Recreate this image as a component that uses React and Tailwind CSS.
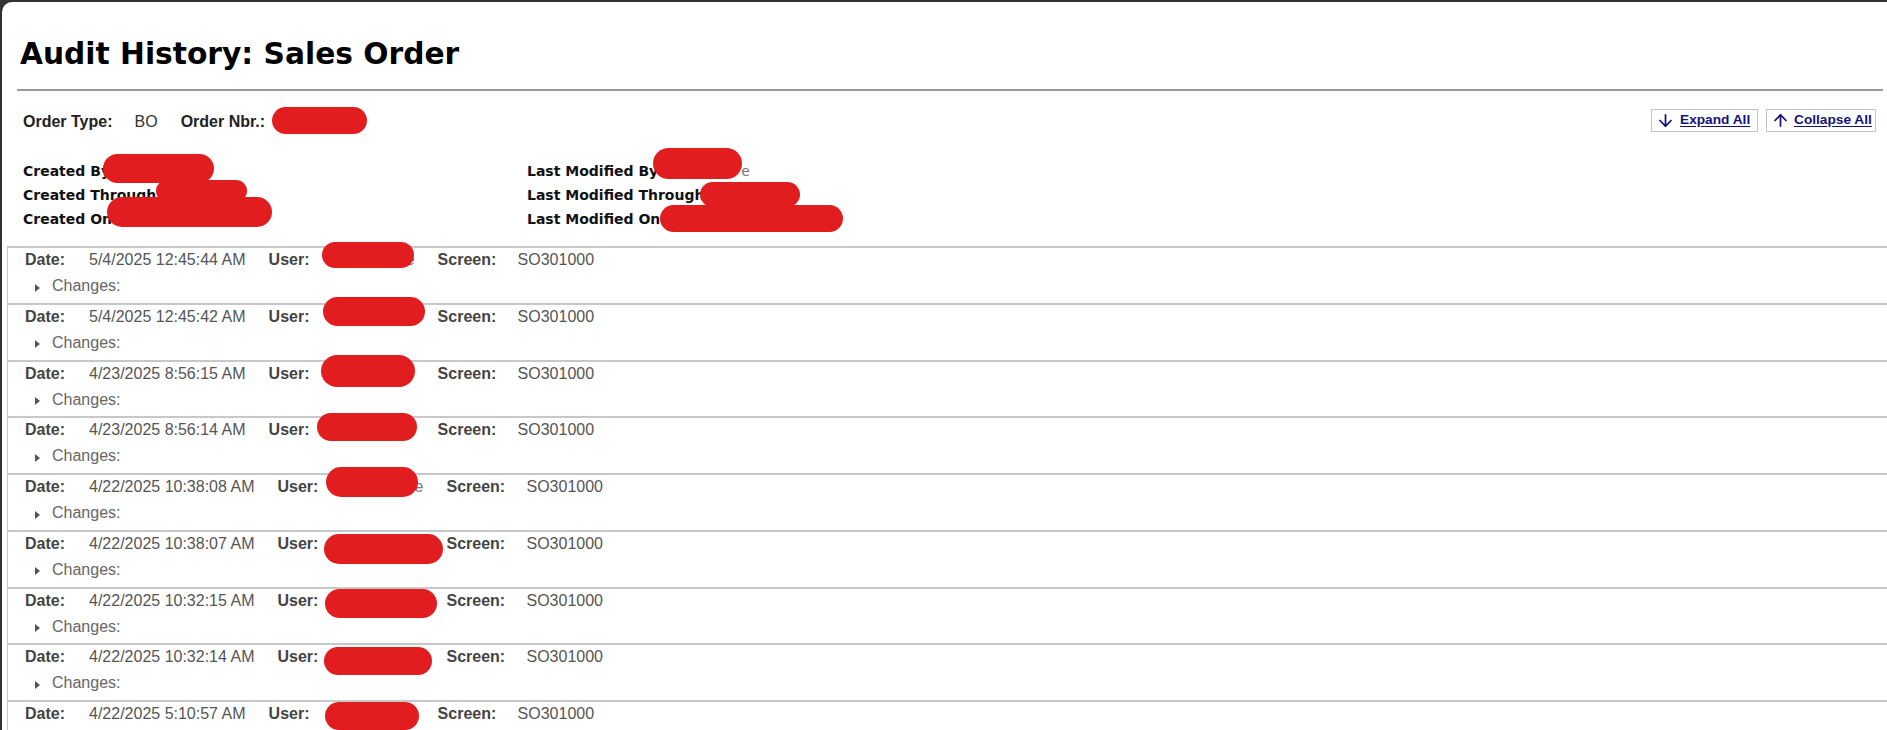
import { ArrowDown, ArrowUp } from "lucide-react";

const rows = [
  { date: "5/4/2025 12:45:44 AM", tail: "e", blob: "left-[-2px] top-[-8px] w-[92px] h-[26px]" },
  { date: "5/4/2025 12:45:42 AM", tail: "", blob: "left-[-1px] top-[-10px] w-[102px] h-[29px]" },
  { date: "4/23/2025 8:56:15 AM", tail: "", blob: "left-[-3px] top-[-9px] w-[94px] h-[32px]" },
  { date: "4/23/2025 8:56:14 AM", tail: "", blob: "left-[-7px] top-[-7px] w-[100px] h-[28px]" },
  { date: "4/22/2025 10:38:08 AM", tail: "e", blob: "left-[-6px] top-[-10px] w-[92px] h-[30px]" },
  { date: "4/22/2025 10:38:07 AM", tail: "", blob: "left-[-8px] top-[0px] w-[119px] h-[30px]" },
  { date: "4/22/2025 10:32:15 AM", tail: "", blob: "left-[-7px] top-[-2px] w-[112px] h-[29px]" },
  { date: "4/22/2025 10:32:14 AM", tail: "", blob: "left-[-8px] top-[0px] w-[108px] h-[28px]" },
  { date: "4/22/2025 5:10:57 AM", tail: "", blob: "left-[1px] top-[-2px] w-[94px] h-[28px]" },
];

const created = [
  { label: "Created By", blob: "left-[80px] top-[-5px] w-[111px] h-[29px]" },
  { label: "Created Through", blob: "left-[133px] top-[-3px] w-[91px] h-[22px]" },
  { label: "Created On", blob: "left-[84px] top-[-10px] w-[165px] h-[30px]" },
];

const modified = [
  { label: "Last Modified By", tail: "e", blob: "left-[126px] top-[-11px] w-[89px] h-[31px]" },
  { label: "Last Modified Through", tail: "", blob: "left-[173px] top-[-1px] w-[100px] h-[25px]" },
  { label: "Last Modified On", tail: "", blob: "left-[133px] top-[-2px] w-[183px] h-[27px]" },
];

function Redact({ className }) {
  return <div className={`absolute rounded-full bg-[#e21d1f] ${className}`} />;
}

function InfoLine({ item }) {
  return (
    <div className="relative h-[24px] leading-[24px] whitespace-nowrap">
      <span className="font-bold text-[#111]">{item.label}</span>
      {item.tail && <span className="ml-[83px] font-normal text-[#777]">{item.tail}</span>}
      <Redact className={item.blob} />
    </div>
  );
}

export default function App() {
  return (
    <div className="h-screen overflow-hidden bg-[#333] pt-[2px] pl-[2px]">
      <div className="h-full overflow-hidden rounded-tl-[10px] bg-white">
        <h1 className="pl-[18px] pt-[34px] text-[29.7px] font-bold leading-[36px] text-black [font-family:'DejaVu_Sans',Verdana,sans-serif]">
          Audit History: Sales Order
        </h1>
        <div className="ml-[15px] mr-[4px] mt-[17px] h-[2px] bg-[#9a9a9a]" />

        <div className="flex items-start justify-between pl-[21px] pr-[11px] pt-[18px] [font-family:'Liberation_Sans',Arial,sans-serif]">
          <div className="relative mt-[3px] flex h-[20px] items-center text-[16px] leading-[20px] text-[#222]">
            <span className="font-bold">Order Type:</span>
            <span className="ml-[22px] text-[#333]">BO</span>
            <span className="ml-[23px] font-bold">Order Nbr.:</span>
            <Redact className="left-[249px] top-[-5px] w-[95px] h-[27px]" />
          </div>
          <div className="flex gap-[8px] text-[13.7px] font-bold">
            <button className="flex h-[23px] w-[107px] items-center border border-[#c4c4c4] bg-white pl-[4px] text-[#14147a]">
              <ArrowDown size={19} strokeWidth={2.2} />
              <span className="ml-[5px] underline underline-offset-2">Expand All</span>
            </button>
            <button className="flex h-[23px] w-[110px] items-center border border-[#c4c4c4] bg-white pl-[4px] text-[#14147a]">
              <ArrowUp size={19} strokeWidth={2.2} />
              <span className="ml-[4px] underline underline-offset-2">Collapse All</span>
            </button>
          </div>
        </div>

        <div className="mt-[27px] grid grid-cols-[504px_1fr] pl-[21px] text-[14px] [font-family:'DejaVu_Sans',Verdana,sans-serif]">
          <div>
            {created.map((c) => (
              <InfoLine key={c.label} item={c} />
            ))}
          </div>
          <div>
            {modified.map((m) => (
              <InfoLine key={m.label} item={m} />
            ))}
          </div>
        </div>

        <div className="ml-[5px] mt-[15px] border-l border-[#c8c8c8] text-[16px] [font-family:'Liberation_Sans',Arial,sans-serif]">
          {rows.map((r, i) => (
            <div key={i} className="box-border h-[56.75px] border-t-2 border-[#c8c8c8] pl-[17px] pt-[2px]">
              <div className="flex h-[20px] items-center leading-[20px] whitespace-nowrap">
                <span className="w-[64px] font-bold text-[#444]">Date:</span>
                <span className="text-[#555]">{r.date}</span>
                <span className="ml-[23px] w-[55px] font-bold text-[#444]">User:</span>
                <div className="relative flex h-[20px] w-[91px] justify-end text-[#777]">
                  <span>{r.tail}</span>
                  <Redact className={r.blob} />
                </div>
                <span className="ml-[23px] w-[80px] font-bold text-[#444]">Screen:</span>
                <span className="text-[#555]">SO301000</span>
              </div>
              <div className="mt-[6px] flex h-[20px] items-center leading-[20px]">
                <span className="ml-[10px] mt-[3px] h-0 w-0 border-y-[4px] border-l-[5px] border-y-transparent border-l-[#555]" />
                <span className="ml-[12px] text-[#666]">Changes:</span>
              </div>
            </div>
          ))}
        </div>
      </div>
    </div>
  );
}
